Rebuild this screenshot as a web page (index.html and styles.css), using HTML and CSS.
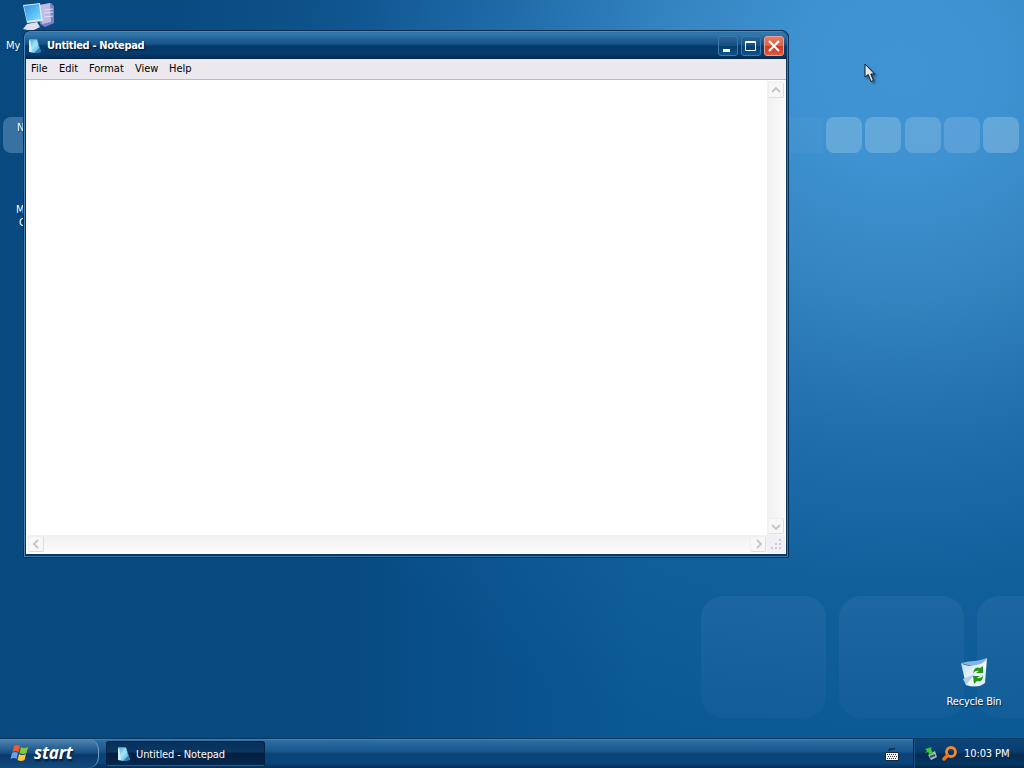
FILE: index.html
```html
<!DOCTYPE html>
<html lang="en">
<head>
    <meta charset="UTF-8">
    <meta name="viewport" content="width=device-width, initial-scale=1.0">
    <title>Untitled - Notepad</title>
    <link rel="stylesheet" href="styles.css">
</head>
<body>
    <svg width="0" height="0" class="defs">
        <defs>
            <linearGradient id="page" x1="0" y1="0" x2="1" y2="1">
                <stop offset="0" stop-color="#3e9fca"/>
                <stop offset=".45" stop-color="#a4e4f8"/>
                <stop offset="1" stop-color="#3ba3d8"/>
            </linearGradient>
            <linearGradient id="screen" x1="0" y1="0" x2="1" y2="1">
                <stop offset="0" stop-color="#2c91e4"/>
                <stop offset="1" stop-color="#83e2ff"/>
            </linearGradient>
            <linearGradient id="bin" x1="0" y1="0" x2="1" y2="1">
                <stop offset="0" stop-color="#b2d3f2"/>
                <stop offset=".6" stop-color="#f4fbff"/>
                <stop offset="1" stop-color="#cfe6f6"/>
            </linearGradient>
            <symbol id="notepad" viewBox="0 0 16 16">
                <path d="M2 1 10 1.500 14 14 7 15 2 14Z" fill="url(#page)"/>
                <path d="M2 2 2 14 5 14 3.500 3Z" fill="#d5eef3"/>
                <path d="M10 1.500 14 14 7 15 12 10Z" fill="#2485bc"/>
            </symbol>
        </defs>
    </svg>

    <div class="desktop">
        <div class="tile small t0"></div>
        <div class="tile faint"></div>
        <div class="tile small t1"></div>
        <div class="tile small t2"></div>
        <div class="tile small t3"></div>
        <div class="tile small t4"></div>
        <div class="tile small t5"></div>
        <div class="tile large t6"></div>
        <div class="tile large t7"></div>
        <div class="tile large t8"></div>

        <div class="icon computer">
            <svg width="34" height="30" viewBox="0 0 34 30">
                <path d="M17 3 29 1 32 4 32 21 23 25 18 22Z" fill="#7f80c2"/>
                <path d="M18 3 28 1 29 20 20 22Z" fill="#bdbce5"/>
                <path d="M22 8 31 7M22 11 31 10M22 15 31 14" stroke="#dfdff5"/>
                <path d="M1 3 18 1 21 19 5 21Z" fill="#dce8fa"/>
                <path d="M2 4 17 2 19 17 5 19Z" fill="url(#screen)"/>
                <path d="M5 22 15 20 18 25 10 29 1 27Z" fill="#e2def1"/>
            </svg>
        </div>
        <div class="label my">My</div>
        <div class="label documents">N</div>
        <div class="label network">M</div>
        <div class="label connections">C</div>

        <div class="icon recycle">
            <svg width="32" height="32" viewBox="0 0 32 32">
                <path d="M3 6Q10 11 18 7T29 1L27 26Q20 32 8 28Z" fill="url(#bin)"/>
                <path d="M3 6Q11 4 16 4T29 1Q26 7 18 8T3 6Z" fill="#82b5e3"/>
                <path d="M5 22 17 17 8 28Z" fill="#a9d2f5"/>
                <path d="M15 17Q16 9 22 11L25 9 25 16 18 16 21 14Q17 13 15 17Z" fill="#23951a"/>
                <path d="M25 18Q25 26 19 24L16 27 15 19 22 19 19 21Q23 22 25 18Z" fill="#23951a"/>
            </svg>
            <span>Recycle Bin</span>
        </div>

        <div class="window">
            <div class="titlebar">
                <svg class="title-icon" width="16" height="16"><use href="#notepad"/></svg>
                <span class="title">Untitled - Notepad</span>
                <div class="buttons">
                    <button class="min"><svg width="18" height="18"><path d="M4 12h7v3H4z" fill="#fff"/></svg></button>
                    <button class="max"><svg width="18" height="18"><path d="M3.500 4.500h10v9h-10zM3 5.500h11" fill="none" stroke="#fff"/></svg></button>
                    <button class="close"><svg width="18" height="18"><path d="M4 4 14 14M14 4 4 14" stroke="#fff" stroke-width="2"/></svg></button>
                </div>
            </div>
            <div class="menu">
                <span class="file">File</span>
                <span class="edit">Edit</span>
                <span class="format">Format</span>
                <span class="view">View</span>
                <span class="help">Help</span>
            </div>
            <div class="client">
                <div class="text"></div>
                <div class="vscroll">
                    <svg width="16" height="16"><path d="M3 9 7 5 11 9" fill="none" stroke="#c5c5c8" stroke-width="1.800"/></svg>
                    <svg width="16" height="16"><path d="M3 6 7 10 11 6" fill="none" stroke="#c5c5c8" stroke-width="1.800"/></svg>
                </div>
                <div class="hscroll">
                    <svg width="16" height="16"><path d="M9 3 5 7 9 11" fill="none" stroke="#c5c5c8" stroke-width="1.800"/></svg>
                    <svg width="16" height="16"><path d="M6 3 10 7 6 11" fill="none" stroke="#c5c5c8" stroke-width="1.800"/></svg>
                </div>
                <div class="grip">
                    <svg width="17" height="17"><path d="M12 4h2v2h-2zM8 8h2v2H8zM12 8h2v2h-2zM4 12h2v2H4zM8 12h2v2H8zM12 12h2v2h-2z" fill="#ceced2"/></svg>
                </div>
            </div>
        </div>

        <svg class="cursor" width="14" height="21" viewBox="0 0 14 21">
            <path d="M1 1V14L4.200 11.500 7 18.500 9.500 17.500 6.800 11H10.500Z" fill="#e7e7e7" stroke="#101720"/>
        </svg>
    </div>

    <div class="taskbar">
        <div class="start">
            <svg width="20" height="18" viewBox="0 0 20 18">
                <path d="M4 2Q7 0 10 2L8.500 8Q6 6 2.500 8Z" fill="#f05b2b"/>
                <path d="M11 3Q14 5 18 3L16.500 9Q13 11 9.500 9Z" fill="#83c93d"/>
                <path d="M2 9Q5 7 8 9L6.500 15Q4 13 .5 15Z" fill="#66a0f3"/>
                <path d="M9 10Q12 12 16 10L14.500 16Q11 18 7.500 16Z" fill="#f9cb36"/>
            </svg>
            <span>start</span>
        </div>
        <div class="task">
            <svg width="16" height="16"><use href="#notepad"/></svg>
            <span>Untitled - Notepad</span>
        </div>
        <svg class="keyboard" width="14" height="14" viewBox="0 0 14 14">
            <path d="M4 4Q4 1 6 2T10 1" fill="none" stroke="#071523"/>
            <path d="M.5 5.500h13v8H.5z" fill="#f4f4f4" stroke="#15283c"/>
            <path d="M2 7.500h10M3 9.500h9M2 11.500h10" stroke="#333" stroke-dasharray="1 1"/>
        </svg>
        <div class="tray">
            <svg class="safe" width="14" height="15" viewBox="0 0 14 15">
                <path d="M4 9 11 5 13 11 7 14Z" fill="#aab9c3"/>
                <path d="M6 11 11 9" stroke="#38505f" stroke-width="2"/>
                <path d="M1 3 8 1 7 3 9 7 6 9 4 6 1 7 3 5Z" fill="#38c837"/>
            </svg>
            <svg class="search" width="17" height="16" viewBox="0 0 17 16">
                <circle cx="10" cy="6" r="4.500" fill="none" stroke="#f58a2b" stroke-width="2.800"/>
                <path d="M6.500 9.500 3 13" stroke="#ed7420" stroke-width="3.500" stroke-linecap="round"/>
            </svg>
            <span class="clock">10:03 PM</span>
        </div>
    </div>
</body>
</html>
```
FILE: styles.css
```css
* {
    box-sizing: border-box;
}

body {
    display: flex;
    flex-direction: column;
    width: 1024px;
    height: 768px;
    margin: 0;
    overflow: hidden;
    font-family: "DejaVu Sans Condensed", "DejaVu Sans", sans-serif;
    font-size: 11px;
    background:
        radial-gradient(ellipse 740px 700px at 900px 70px, #4094d3 0%, rgba(64, 148, 211, 0.97) 14%, rgba(60, 141, 201, 0.85) 31%, rgba(43, 121, 183, 0.66) 53%, rgba(30, 107, 168, 0.35) 74%, rgba(20, 92, 150, 0) 100%),
        linear-gradient(90deg, #084980 0%, #084980 30%, #0a5894 62%, #0a5894 100%);
}

svg {
    display: block;
    flex: none;
}

.defs {
    position: absolute;
}

.desktop {
    position: relative;
    flex: 1;
}

/* Wallpaper squares */
.tile {
    position: absolute;
    background: rgba(158, 199, 229, 0.4);
}

.small {
    top: 117px;
    width: 36px;
    height: 36px;
    border-radius: 8px;
}

.t0 { left: 3px; background: rgba(133, 176, 215, 0.4); }
.t1 { left: 826px; }
.t2 { left: 865px; }
.t3 { left: 905px; opacity: 0.85; }
.t4 { left: 944px; opacity: 0.7; }
.t5 { left: 983px; }

.faint {
    top: 117px;
    left: 789px;
    width: 34px;
    height: 36px;
    opacity: 0.15;
}

.large {
    top: 596px;
    width: 125px;
    height: 122px;
    border-radius: 22px;
    background: linear-gradient(rgba(110, 163, 202, 0.13), rgba(80, 133, 180, 0.09));
}

.t6 { left: 701px; }
.t7 { left: 839px; }
.t8 { left: 977px; width: 47px; border-radius: 22px 0 0 22px; }

/* Desktop icons */
.icon {
    position: absolute;
    display: flex;
    flex-direction: column;
    align-items: center;
    color: #fff;
    text-shadow: 1px 1px 1px #002c59;
    white-space: nowrap;
}

.computer {
    top: 2px;
    left: 22px;
}

.recycle {
    top: 657px;
    left: 944px;
    width: 60px;
    gap: 6px;
    letter-spacing: -0.2px;
}

.label {
    position: absolute;
    height: 13px;
    overflow: hidden;
    color: #fff;
    line-height: 13px;
    text-shadow: 1px 1px 1px #002c59;
}

.my {
    top: 39px;
    left: 6px;
}

.documents {
    top: 121px;
    left: 17px;
    width: 6px;
}

.network {
    top: 203px;
    left: 16px;
    width: 7px;
}

.connections {
    top: 216px;
    left: 19px;
    width: 4px;
}

/* Notepad */
.window {
    position: absolute;
    top: 30px;
    left: 23px;
    display: flex;
    flex-direction: column;
    width: 766px;
    height: 528px;
    padding: 0 3px 3px;
    border: 1px solid #052d54;
    border-radius: 7px 7px 0 0;
    background: #073763;
    box-shadow: inset 1px 1px #4b88b6, inset -1px -1px #3c79a8;
}

.titlebar {
    display: flex;
    align-items: center;
    height: 27px;
    margin: 1px -2px 0;
    padding: 0 3px 0 2px;
    border-radius: 5px 5px 0 0;
    background: linear-gradient(#2b73ab 0, #3678aa 2px, #205f96 8px, #16548a 12px, #07396b 14px, #063b6c 22px, #05284d 27px);
    color: #fff;
}

.title {
    flex: 1;
    margin-left: 4px;
    font-weight: bold;
    letter-spacing: -0.35px;
    text-shadow: 1px 1px 1px #00152c;
}

.buttons {
    display: flex;
    gap: 3px;
}

button {
    width: 20px;
    height: 20px;
    padding: 0;
    border: 1px solid #387caf;
    border-radius: 3px;
    background: linear-gradient(#2b6697, #174d80 48%, #063c6f 50%, #0b548a);
}

.close {
    border-color: #e9a198;
    background: linear-gradient(#e77b65, #dc6247 48%, #c93821 50%, #e25a3b);
}

.menu {
    display: flex;
    height: 21px;
    margin: 0 -1px;
    padding: 2px 5px 0;
    border-bottom: 1px solid #bcbbc1;
    background: #ebe9ee;
    color: #000;
    line-height: 15px;
}

.file { width: 28px; }
.edit { width: 30px; }
.format { width: 46px; }
.view { width: 34px; }

.client {
    display: grid;
    grid-template-columns: 1fr 18px;
    grid-template-rows: 1fr 18px;
    flex: 1;
    margin: 0 -1px;
    padding: 1px;
    background: #fff;
}

.vscroll,
.hscroll {
    display: flex;
    justify-content: space-between;
    background: linear-gradient(90deg, #f1f1f3, #fafafa);
}

.vscroll {
    flex-direction: column;
    padding: 1px;
}

.hscroll {
    padding: 1px;
    background: linear-gradient(#f1f1f3, #fbfbfb);
}

.vscroll svg,
.hscroll svg {
    border: 1px solid #dedee2;
    border-top-color: #efeff1;
    border-left-color: #efeff1;
    border-radius: 2px;
    background: #f7f7f8;
}

.grip {
    background: #f1f0f4;
}

.cursor {
    position: absolute;
    top: 63px;
    left: 864px;
    filter: drop-shadow(2px 2px 1px rgba(0, 25, 50, 0.45));
}

/* Taskbar */
.taskbar {
    display: flex;
    align-items: center;
    height: 30px;
    border-top: 1px solid #073860;
    background: linear-gradient(#4a83b0 0, #2b6ca3 2px, #19588f 12px, #0b4378 15px, #09457a 24px, #062e57 29px);
    color: #fff;
}

.start {
    display: flex;
    align-items: center;
    width: 99px;
    height: 29px;
    padding: 0 0 2px 10px;
    border-right: 1px solid #6d9dc0;
    border-radius: 0 11px 11px 0;
    background: linear-gradient(#5488b3 0, #32699a 7px, #164f83 14px, #0a386a 16px, #124a7c 28px);
}

.start span {
    margin-left: 4px;
    font-family: "Open Sans", "Noto Sans", sans-serif;
    font-size: 17px;
    font-weight: bold;
    font-style: italic;
    letter-spacing: -0.15px;
    line-height: 20px;
    text-shadow: 1px 2px 2px #001d3b;
}

.task {
    display: flex;
    align-items: center;
    width: 159px;
    height: 25px;
    margin-left: 7px;
    padding-left: 9px;
    border: 1px solid #021e3d;
    border-bottom-color: #245c8c;
    border-radius: 3px;
    background: linear-gradient(#07315a, #0a3764 44%, #031d3e 48%, #04284e);
}

.task span {
    margin-left: 4px;
    padding-top: 1px;
    letter-spacing: -0.12px;
}

.keyboard {
    margin-left: auto;
    margin-right: 14px;
}

.tray {
    display: flex;
    align-items: center;
    width: 111px;
    height: 29px;
    padding-left: 10px;
    border-left: 1px solid #011c38;
    box-shadow: inset 1px 0 #195184;
    background: linear-gradient(#0c467b, #0a3d70 12px, #042b54 16px, #053761 25px, #03254a);
}

.search {
    margin-left: 3px;
}

.clock {
    margin-left: 6px;
    white-space: nowrap;
    letter-spacing: -0.1px;
}
```
